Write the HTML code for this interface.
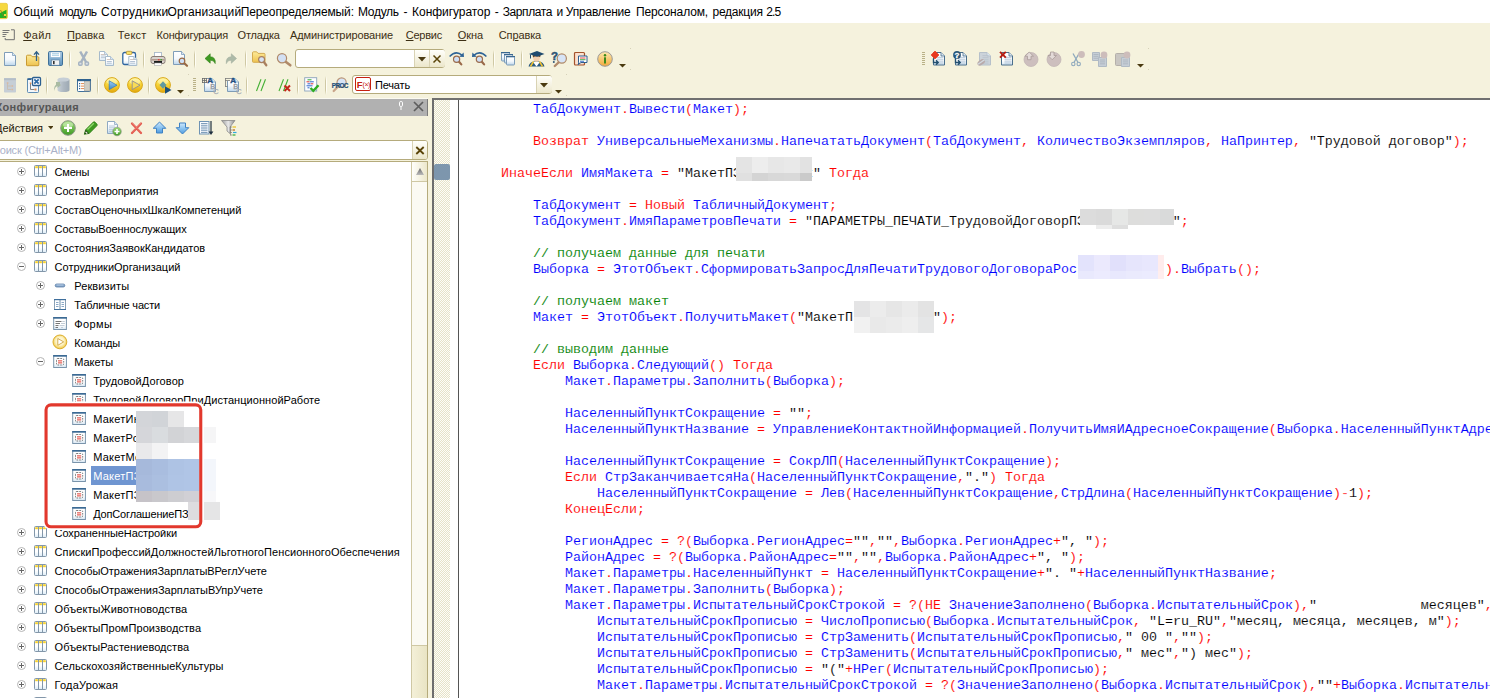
<!DOCTYPE html>
<html lang="ru"><head><meta charset="utf-8"><title>Конфигуратор</title>
<style>
html,body{margin:0;padding:0}
body{width:1490px;height:698px;overflow:hidden;position:relative;background:#f5f2dd;font-family:'Liberation Sans',sans-serif}
.t{position:absolute;white-space:pre}
.i{position:absolute;overflow:visible}
u{text-decoration:underline;text-underline-offset:1px}
.r{color:#f00}.k{color:#000}.g{color:#008000}
</style></head><body>
<div style="position:absolute;left:0;top:0;width:1490px;height:23px;background:#fff"></div>
<svg class="i" style="left:-3px;top:3px" width="11" height="16" viewBox="0 0 11 16"><defs><linearGradient id="gPage" x1="0" y1="0" x2="0" y2="1"><stop offset="0" stop-color="#ffffff"/><stop offset="0.55" stop-color="#f4f8fc"/><stop offset="1" stop-color="#bcd6ec"/></linearGradient><linearGradient id="gPg2" x1="0" y1="0" x2="0" y2="1"><stop offset="0" stop-color="#ffffff"/><stop offset="0.65" stop-color="#ffffff"/><stop offset="1" stop-color="#d6e6f3"/></linearGradient><linearGradient id="gFold" x1="0" y1="0" x2="0" y2="1"><stop offset="0" stop-color="#fdeb9a"/><stop offset="1" stop-color="#eec24f"/></linearGradient><linearGradient id="gGold" x1="0" y1="0" x2="0" y2="1"><stop offset="0" stop-color="#fff29a"/><stop offset="0.45" stop-color="#f8d63a"/><stop offset="1" stop-color="#e3a70c"/></linearGradient><linearGradient id="gBtn" x1="0" y1="0" x2="0" y2="1"><stop offset="0" stop-color="#fffffb"/><stop offset="1" stop-color="#ece7cb"/></linearGradient><linearGradient id="gFlop" x1="0" y1="0" x2="0" y2="1"><stop offset="0" stop-color="#a9cbe6"/><stop offset="1" stop-color="#5f93bd"/></linearGradient><linearGradient id="gCyl" x1="0" y1="0" x2="1" y2="0"><stop offset="0" stop-color="#c9d1d8"/><stop offset="0.5" stop-color="#aeb8c1"/><stop offset="1" stop-color="#9ca8b3"/></linearGradient><linearGradient id="gGreen" x1="0" y1="0" x2="0" y2="1"><stop offset="0" stop-color="#9fdc7a"/><stop offset="1" stop-color="#3e9a22"/></linearGradient><linearGradient id="gBlueArr" x1="0" y1="0" x2="0" y2="1"><stop offset="0" stop-color="#9fd0f5"/><stop offset="1" stop-color="#3c86c8"/></linearGradient><linearGradient id="gBlueArr2" x1="0" y1="0" x2="0" y2="1"><stop offset="0" stop-color="#cfe8fb"/><stop offset="0.5" stop-color="#8cc4f0"/><stop offset="1" stop-color="#4f9be0"/></linearGradient><linearGradient id="gInfo" x1="0" y1="0" x2="0" y2="1"><stop offset="0" stop-color="#ffe9b0"/><stop offset="1" stop-color="#f0a93a"/></linearGradient><linearGradient id="gCol" x1="0" y1="0" x2="0" y2="1"><stop offset="0.55" stop-color="#fff"/><stop offset="1" stop-color="#dcecf7"/></linearGradient><radialGradient id="gCmd" cx=".5" cy=".45" r=".55"><stop offset="0" stop-color="#fffdf0"/><stop offset=".55" stop-color="#fdf3c4"/><stop offset="1" stop-color="#efc53f"/></radialGradient><linearGradient id="gFun" x1="0" y1="0" x2="1" y2="0"><stop offset="0" stop-color="#9a9a9a"/><stop offset="0.5" stop-color="#e8e8e8"/><stop offset="1" stop-color="#8a8a8a"/></linearGradient></defs><rect x="-2" y="0.3" width="12.5" height="15.4" rx="1.6" fill="#f6d83f" stroke="#e2bf2d" stroke-width="0.6"/><path d="M-2 15V12.5L9.5 6.8V15z" fill="#1fb322"/><rect x="7" y="11" width="2" height="2" fill="#f6d83f"/><path d="M3.5 7l4 8" stroke="#8a7a2a" stroke-width="0.8"/></svg>
<div style="position:absolute;left:0;top:5px;height:15px;width:800px">
<span class="t" style="left:13.5px;top:0;font:12px/15px 'Liberation Sans',sans-serif;color:#000;letter-spacing:0.200px">Общий </span>
<span class="t" style="left:59.2px;top:0;font:12px/15px 'Liberation Sans',sans-serif;color:#000;letter-spacing:-0.551px">модуль </span>
<span class="t" style="left:101.1px;top:0;font:12px/15px 'Liberation Sans',sans-serif;color:#000;letter-spacing:0.222px">Сотрудники</span>
<span class="t" style="left:167.5px;top:0;font:12px/15px 'Liberation Sans',sans-serif;color:#000;letter-spacing:0.101px">Организаций</span>
<span class="t" style="left:240.7px;top:0;font:12px/15px 'Liberation Sans',sans-serif;color:#000;letter-spacing:-0.123px">Переопределяемый: </span>
<span class="t" style="left:357.9px;top:0;font:12px/15px 'Liberation Sans',sans-serif;color:#000;letter-spacing:-0.269px">Модуль </span>
<span class="t" style="left:403.5px;top:0;font:12px/15px 'Liberation Sans',sans-serif;color:#000;letter-spacing:0.000px">- </span>
<span class="t" style="left:412.1px;top:0;font:12px/15px 'Liberation Sans',sans-serif;color:#000;letter-spacing:-0.055px">Конфигуратор </span>
<span class="t" style="left:494.7px;top:0;font:12px/15px 'Liberation Sans',sans-serif;color:#000;letter-spacing:0.000px">- </span>
<span class="t" style="left:502.7px;top:0;font:12px/15px 'Liberation Sans',sans-serif;color:#000;letter-spacing:-0.392px">Зарплата </span>
<span class="t" style="left:556.4px;top:0;font:12px/15px 'Liberation Sans',sans-serif;color:#000;letter-spacing:0.000px">и </span>
<span class="t" style="left:565.8px;top:0;font:12px/15px 'Liberation Sans',sans-serif;color:#000;letter-spacing:-0.191px">Управление </span>
<span class="t" style="left:635.9px;top:0;font:12px/15px 'Liberation Sans',sans-serif;color:#000;letter-spacing:-0.118px">Персоналом, </span>
<span class="t" style="left:712.5px;top:0;font:12px/15px 'Liberation Sans',sans-serif;color:#000;letter-spacing:-0.242px">редакция </span>
<span class="t" style="left:766.2px;top:0;font:12px/15px 'Liberation Sans',sans-serif;color:#000;letter-spacing:-0.844px">2.5 </span>
</div>
<svg class="i" style="left:2px;top:29px" width="14" height="12" viewBox="0 0 14 12"><path d="M0.5 1.5h7M0.5 3.5h6M0.5 5.5h4M0.5 7.5h3" stroke="#777" stroke-width="1"/><path d="M9 0.8h3.3v9.9H3.2V9" fill="none" stroke="#6f6f6f" stroke-width="1"/></svg>
<div class="t" style="left:23.2px;top:28px;font:11px/14px 'Liberation Sans',sans-serif;color:#3c2f14;letter-spacing:0.263px"><u>Ф</u>айл</div>
<div class="t" style="left:67px;top:28px;font:11px/14px 'Liberation Sans',sans-serif;color:#3c2f14;letter-spacing:0.021px"><u>П</u>равка</div>
<div class="t" style="left:117.8px;top:28px;font:11px/14px 'Liberation Sans',sans-serif;color:#3c2f14;letter-spacing:0.219px">Текст</div>
<div class="t" style="left:156.6px;top:28px;font:11px/14px 'Liberation Sans',sans-serif;color:#3c2f14;letter-spacing:-0.202px">Конфигурация</div>
<div class="t" style="left:237.6px;top:28px;font:11px/14px 'Liberation Sans',sans-serif;color:#3c2f14;letter-spacing:-0.183px">Отладка</div>
<div class="t" style="left:290px;top:28px;font:11px/14px 'Liberation Sans',sans-serif;color:#3c2f14;letter-spacing:-0.106px">Администрирование</div>
<div class="t" style="left:405.8px;top:28px;font:11px/14px 'Liberation Sans',sans-serif;color:#3c2f14;letter-spacing:-0.245px"><u>С</u>ервис</div>
<div class="t" style="left:457.8px;top:28px;font:11px/14px 'Liberation Sans',sans-serif;color:#3c2f14;letter-spacing:-0.091px"><u>О</u>кна</div>
<div class="t" style="left:498.8px;top:28px;font:11px/14px 'Liberation Sans',sans-serif;color:#3c2f14;letter-spacing:-0.122px">Сп<u>р</u>авка</div>
<svg class="i" style="left:3px;top:51px" width="16" height="16" viewBox="0 0 16 16"><path d="M1.5 1.5h8l3 3v10h-11z" fill="url(#gPage)" stroke="#7f9db9" stroke-width="1"/><path d="M9.5 1.5v3h3" fill="#dbe8f4" stroke="#7f9db9" stroke-width="0.8"/></svg>
<svg class="i" style="left:25px;top:51px" width="16" height="16" viewBox="0 0 16 16"><path d="M1.5 5.2q0-1 1-1h3.4l1.3 1.5h5.6q1 0 1 1V14q0 .7-.8.7H2.3q-.8 0-.8-.7z" fill="url(#gFold)" stroke="#c99a32" stroke-width="1"/><path d="M11.5 10V1.2M9 3.6L11.5 0.8 14 3.6" fill="none" stroke="#2f5f88" stroke-width="1.3"/></svg>
<svg class="i" style="left:47px;top:51px" width="16" height="16" viewBox="0 0 16 16"><rect x="1.5" y="0.5" width="14" height="14" rx="1.2" fill="url(#gFlop)" stroke="#3f7099" stroke-width="1"/><rect x="3.5" y="1" width="10" height="5.3" fill="#fff" stroke="#8fb4d2" stroke-width=".6"/><path d="M5 2.7h7M5 4.3h7" stroke="#8fc0dc" stroke-width=".8"/><rect x="4.5" y="9" width="8" height="5.2" fill="#f2f2f2" stroke="#5b7f9e" stroke-width=".6"/><rect x="6" y="10" width="1.6" height="3.2" fill="#333"/></svg>
<div style="position:absolute;left:69px;top:50px;width:1px;height:19px;background:linear-gradient(#f5f2dd,#cfc8a4 25%,#cfc8a4 75%,#f5f2dd)"></div>
<div style="position:absolute;left:70px;top:50px;width:1px;height:19px;background:linear-gradient(#f5f2dd,#fffef6 25%,#fffef6 75%,#f5f2dd)"></div>
<svg class="i" style="left:76px;top:51px" width="16" height="16" viewBox="0 0 16 16"><path d="M4.200 0.500L10.300 11.500M11 0.500L4.900 11.500" stroke="#a6b3c1" stroke-width="2.500"/><rect x="2.700" y="11" width="3.400" height="3.300" rx="1" fill="#d9dfe6" stroke="#a6b3c1" stroke-width="1.400"/><rect x="9.100" y="11" width="3.400" height="3.300" rx="1" fill="#d9dfe6" stroke="#a6b3c1" stroke-width="1.400"/></svg>
<svg class="i" style="left:98px;top:51px" width="16" height="16" viewBox="0 0 16 16"><path d="M1.5 0.5h5l3 3v6h-8z" fill="url(#gPg2)" stroke="#a6bacb" stroke-width="1"/><path d="M6.5 0.5v3h3" fill="#dbe8f4" stroke="#a6bacb" stroke-width="0.8"/><path d="M2.8 3.5h4" stroke="#c9b9b0" stroke-width=".8"/><path d="M2.8 5.0h5" stroke="#9fb3c9" stroke-width=".8"/><path d="M2.8 6.7h5" stroke="#9fb3c9" stroke-width=".8"/><path d="M7.5 5.5h5l3 3v6h-8z" fill="url(#gPg2)" stroke="#a6bacb" stroke-width="1"/><path d="M12.5 5.5v3h3" fill="#dbe8f4" stroke="#a6bacb" stroke-width="0.8"/><path d="M8.8 8.5h4" stroke="#c9b9b0" stroke-width=".8"/><path d="M8.8 10.5h5" stroke="#9fb3c9" stroke-width=".8"/><path d="M8.8 12.2h5" stroke="#9fb3c9" stroke-width=".8"/></svg>
<svg class="i" style="left:122px;top:51px" width="16" height="16" viewBox="0 0 16 16"><rect x="0.800" y="1.500" width="12.700" height="12" rx="1.800" fill="url(#gPg2)" stroke="#2f65a0" stroke-width="1.300"/><rect x="4.300" y="0.300" width="5.600" height="3.200" rx="1.200" fill="#f7e06a" stroke="#b8912c" stroke-width=".8"/><path d="M6.8 5.5h5l3 3v6h-8z" fill="url(#gPg2)" stroke="#a6bacb" stroke-width="1"/><path d="M11.8 5.5v3h3" fill="#dbe8f4" stroke="#a6bacb" stroke-width="0.8"/><path d="M8.1 8.5h4" stroke="#c9b9b0" stroke-width=".8"/><path d="M8.1 10.5h5" stroke="#9fb3c9" stroke-width=".8"/><path d="M8.1 12.2h5" stroke="#9fb3c9" stroke-width=".8"/></svg>
<div style="position:absolute;left:143px;top:50px;width:1px;height:19px;background:linear-gradient(#f5f2dd,#cfc8a4 25%,#cfc8a4 75%,#f5f2dd)"></div>
<div style="position:absolute;left:144px;top:50px;width:1px;height:19px;background:linear-gradient(#f5f2dd,#fffef6 25%,#fffef6 75%,#f5f2dd)"></div>
<svg class="i" style="left:150px;top:51px" width="16" height="16" viewBox="0 0 16 16"><rect x="4.5" y="1.5" width="7" height="5" fill="#fff" stroke="#a9b9c9" stroke-width=".9"/><rect x="1" y="5.5" width="14" height="7" rx="2" fill="#d9d4cf" stroke="#8a7d76" stroke-width="1"/><rect x="1.8" y="8" width="12.4" height="1.6" fill="#b39c8f"/><rect x="4" y="10" width="8" height="3" fill="#1c1c1c"/><rect x="4.5" y="12" width="7" height="2.6" fill="#fff" stroke="#999" stroke-width=".5"/><rect x="8.2" y="8.1" width="1.3" height="1.3" fill="#e22"/><rect x="10.5" y="8.1" width="1.3" height="1.3" fill="#2a2"/></svg>
<svg class="i" style="left:172px;top:51px" width="16" height="16" viewBox="0 0 16 16"><path d="M1.5 0.5h8l3 3v10h-11z" fill="url(#gPage)" stroke="#7f9db9" stroke-width="1"/><path d="M9.5 0.5v3h3" fill="#dbe8f4" stroke="#7f9db9" stroke-width="0.8"/><path d="M11.82 11.82L15 14.8" stroke="#9a6a44" stroke-width="2.2" stroke-linecap="round"/><circle cx="10" cy="10" r="2.8" fill="#cfe0f6" stroke="#9a6a44" stroke-width="1.2"/></svg>
<div style="position:absolute;left:194px;top:50px;width:1px;height:19px;background:linear-gradient(#f5f2dd,#cfc8a4 25%,#cfc8a4 75%,#f5f2dd)"></div>
<div style="position:absolute;left:195px;top:50px;width:1px;height:19px;background:linear-gradient(#f5f2dd,#fffef6 25%,#fffef6 75%,#f5f2dd)"></div>
<svg class="i" style="left:202px;top:51px" width="16" height="16" viewBox="0 0 16 16"><path d="M3 7.5L8.2 2.8v3q5.6 0 5 6.8q-1.2-3.6-5-3.4v3z" fill="#3f9a22" stroke="#2f7f16" stroke-width=".6"/></svg>
<svg class="i" style="left:223px;top:51px" width="16" height="16" viewBox="0 0 16 16"><path d="M13.5 7.5L8.3 2.8v3q-5.6 0-5 6.8q1.2-3.6 5-3.4v3z" fill="#adbaa8" stroke="#a2afa0" stroke-width=".6"/></svg>
<div style="position:absolute;left:245px;top:50px;width:1px;height:19px;background:linear-gradient(#f5f2dd,#cfc8a4 25%,#cfc8a4 75%,#f5f2dd)"></div>
<div style="position:absolute;left:246px;top:50px;width:1px;height:19px;background:linear-gradient(#f5f2dd,#fffef6 25%,#fffef6 75%,#f5f2dd)"></div>
<svg class="i" style="left:251px;top:51px" width="16" height="16" viewBox="0 0 16 16"><path d="M1.5 1.8q0-1 1-1h3.2l1.3 1.6h6q1 0 1 1V10.500q0 .8-.8.8H2.300q-.8 0-.8-.8z" fill="url(#gFold)" stroke="#d3ab52" stroke-width="1"/><path d="M12.55 10.55L15.3 14.3" stroke="#a9805f" stroke-width="2.3" stroke-linecap="round"/><circle cx="10.6" cy="8.6" r="3" fill="#d5e2f5" stroke="#a9805f" stroke-width="1.2"/></svg>
<svg class="i" style="left:276px;top:51px" width="16" height="16" viewBox="0 0 16 16"><path d="M8.99 10.19L14.3 14.3" stroke="#b08a6a" stroke-width="2.6" stroke-linecap="round"/><circle cx="6" cy="7.2" r="4.6" fill="#d3e0f3" stroke="#b08a6a" stroke-width="1.2"/></svg>
<div style="position:absolute;left:295px;top:49px;width:148px;height:17px;border:1px solid #b5ab7c;border-radius:3px;background:#fff"></div>
<div style="position:absolute;left:414px;top:50px;width:15px;height:17px;border-left:1px solid #d9d3b4;background:linear-gradient(#fffffb,#ece7cb)"></div>
<div style="position:absolute;left:429px;top:50px;width:15px;height:17px;border-left:1px solid #d9d3b4;border-radius:0 2px 2px 0;background:linear-gradient(#fffffb,#ece7cb)"></div>
<svg style="position:absolute;left:418px;top:57px" width="8" height="5.5" viewBox="0 0 8 5.5"><path d="M0 0h8l-4.0 4.5z" fill="#4a3a10"/></svg>
<svg style="position:absolute;left:432px;top:53.500px" width="10" height="10" viewBox="0 0 10 10"><path d="M1.5 1.5l7 7M8.5 1.5l-7 7" stroke="#5a4408" stroke-width="1.500"/></svg>
<svg class="i" style="left:448px;top:51px" width="17" height="16" viewBox="0 0 17 16"><path d="M1.6 5.6Q8 -1.2 14.2 4.4" fill="none" stroke="#2f6496" stroke-width="1.5"/><path d="M11.2 5.8L16 6 15.6 1.4z" fill="#2f6496"/><path d="M10.615 10.315000000000001L13.3 13.4" stroke="#9a6a4a" stroke-width="2.2" stroke-linecap="round"/><circle cx="8.6" cy="8.3" r="3.1" fill="#cfe0f6" stroke="#9a6a4a" stroke-width="1.2"/></svg>
<svg class="i" style="left:471px;top:51px" width="17" height="16" viewBox="0 0 17 16"><path d="M15.400 5.6Q9 -1.2 2.8 4.4" fill="none" stroke="#2f6496" stroke-width="1.5"/><path d="M5.8 5.8L1 6 1.400 1.400z" fill="#2f6496"/><path d="M10.415000000000001 10.315000000000001L13.1 13.4" stroke="#9a6a4a" stroke-width="2.2" stroke-linecap="round"/><circle cx="8.4" cy="8.3" r="3.1" fill="#cfe0f6" stroke="#9a6a4a" stroke-width="1.2"/></svg>
<div style="position:absolute;left:493px;top:50px;width:1px;height:19px;background:linear-gradient(#f5f2dd,#cfc8a4 25%,#cfc8a4 75%,#f5f2dd)"></div>
<div style="position:absolute;left:494px;top:50px;width:1px;height:19px;background:linear-gradient(#f5f2dd,#fffef6 25%,#fffef6 75%,#f5f2dd)"></div>
<svg class="i" style="left:500px;top:51px" width="16" height="16" viewBox="0 0 16 16"><rect x="1.5" y="1.5" width="8" height="8.5" rx=".8" fill="url(#gPage)" stroke="#7d9cb8" stroke-width="1"/><rect x="1" y="1" width="9" height="1.300" fill="#3a6890"/><rect x="4.5" y="3.5" width="8" height="8.5" rx=".8" fill="url(#gPage)" stroke="#7d9cb8" stroke-width="1"/><rect x="4" y="3" width="9" height="1.300" fill="#3a6890"/><rect x="6.5" y="5.5" width="8" height="8.5" rx=".8" fill="url(#gPage)" stroke="#7d9cb8" stroke-width="1"/><rect x="6" y="5" width="9" height="1.300" fill="#3a6890"/></svg>
<div style="position:absolute;left:521px;top:50px;width:1px;height:19px;background:linear-gradient(#f5f2dd,#cfc8a4 25%,#cfc8a4 75%,#f5f2dd)"></div>
<div style="position:absolute;left:522px;top:50px;width:1px;height:19px;background:linear-gradient(#f5f2dd,#fffef6 25%,#fffef6 75%,#f5f2dd)"></div>
<svg class="i" style="left:528px;top:51px" width="17" height="16" viewBox="0 0 17 16"><path d="M0.5 15.5q1-4.500 5.500-5l5 0q4.500 .5 5.500 5z" fill="#2b5a80"/><path d="M5 11l3.500 4.500 3.500-4.500z" fill="#fff"/><path d="M2.500 15.5l3-5M14.500 15.5l-3-5" stroke="#f2c230" stroke-width="1.5"/><ellipse cx="8.500" cy="7" rx="3.300" ry="3.800" fill="#f3cfae"/><path d="M5 6.500q3.500-2.500 7.200-.2l.3-2.300h-7.800z" fill="#6b4a2a"/><path d="M1 3L9 0l7.500 3L9 5.800z" fill="#1f4a6e"/><path d="M2.500 3.500v4" stroke="#1f4a6e" stroke-width="1"/></svg>
<svg class="i" style="left:551px;top:51px" width="17" height="16" viewBox="0 0 17 16"><text x="0" y="9" font-family="Liberation Sans,sans-serif" font-weight="bold" font-size="11.500" fill="#2c5577" stroke="#2c5577" stroke-width=".5">?</text><circle cx="2.800" cy="11" r="1" fill="#2c5577"/><path d="M7.500 11.500L3.800 15" stroke="#b08a6a" stroke-width="2.400" stroke-linecap="round"/><circle cx="10.800" cy="7.500" r="4.600" fill="#d7e4f6" stroke="#b08a6a" stroke-width="1.200"/></svg>
<svg class="i" style="left:573px;top:51px" width="16" height="16" viewBox="0 0 16 16"><rect x="1.500" y="1.500" width="10" height="12.500" rx="1" fill="#fbe1d0" stroke="#a4532c" stroke-width="1.200"/><path d="M5.500 5h8.500v6.500h-6l-3 2.200 1-2.200h-.5z" fill="#fff" stroke="#2f5f8f" stroke-width="1"/><path d="M7 7h5.500" stroke="#d33" stroke-width=".9"/><path d="M7 8.700h5.500" stroke="#3a3" stroke-width=".9"/><path d="M7 10.300h4" stroke="#36c" stroke-width=".9"/></svg>
<svg class="i" style="left:597px;top:51px" width="16" height="16" viewBox="0 0 16 16"><circle cx="8" cy="8" r="7.300" fill="url(#gInfo)" stroke="#9c9a98" stroke-width="1"/><circle cx="8" cy="4.200" r="1.200" fill="#3a8a1a"/><rect x="7" y="6.300" width="2" height="6.200" fill="#3a8a1a"/></svg>
<svg style="position:absolute;left:619px;top:64px" width="7" height="4.6" viewBox="0 0 7 4.6"><path d="M0 0h7l-3.5 3.6z" fill="#4a3a10"/></svg>
<div style="position:absolute;left:922px;top:52px;width:3px;height:13px;background:repeating-linear-gradient(#b9b187 0 1px,transparent 1px 2px)"></div>
<svg class="i" style="left:931px;top:51px" width="16" height="16" viewBox="0 0 16 16"><path d="M2.5 1.5h7.5l3.5 3.5v9.0h-11z" fill="url(#gPg2)" stroke="#4a6f8c" stroke-width="1"/><path d="M10.0 1.5v3.5h3.5" fill="#dbe8f4" stroke="#4a6f8c" stroke-width="0.8"/><path d="M5.5 6.3h7" stroke="#9fb9d0" stroke-width=".8"/><path d="M5.5 8.2h7" stroke="#9fb9d0" stroke-width=".8"/><path d="M5.5 10.1h7" stroke="#9fb9d0" stroke-width=".8"/><path d="M5.5 12.0h7" stroke="#9fb9d0" stroke-width=".8"/><path d="M2.500 7.500v4h4M5 9.300l2.200 2.200L5 13.700" fill="none" stroke="#23506f" stroke-width="1.400"/><path d="M4 0.100L7.900 4 4 7.900 0.100 4z" fill="#e8391f" stroke="#e8391f" stroke-width=".8" stroke-linejoin="round"/></svg>
<svg class="i" style="left:953px;top:51px" width="16" height="16" viewBox="0 0 16 16"><path d="M2.5 1.5h7.5l3.5 3.5v9.0h-11z" fill="url(#gPg2)" stroke="#4a6f8c" stroke-width="1"/><path d="M10.0 1.5v3.5h3.5" fill="#dbe8f4" stroke="#4a6f8c" stroke-width="0.8"/><path d="M5.5 6.3h7" stroke="#9fb9d0" stroke-width=".8"/><path d="M5.5 8.2h7" stroke="#9fb9d0" stroke-width=".8"/><path d="M5.5 10.1h7" stroke="#9fb9d0" stroke-width=".8"/><path d="M5.5 12.0h7" stroke="#9fb9d0" stroke-width=".8"/><path d="M2.500 7.500v4h4M5 9.300l2.200 2.200L5 13.700" fill="none" stroke="#23506f" stroke-width="1.400"/><circle cx="4" cy="4" r="3.900" fill="#2b5778"/><text x="1.600" y="7" font-family="Liberation Sans,sans-serif" font-weight="bold" font-size="8" fill="#fff" stroke="#fff" stroke-width=".3">?</text></svg>
<svg class="i" style="left:977px;top:51px" width="16" height="16" viewBox="0 0 16 16"><path d="M2.5 1.5h7.5l3.5 3.5v9.0h-11z" fill="#ccd3da" stroke="#b6c0ca" stroke-width="1"/><path d="M10.0 1.5v3.5h3.5" fill="#dbe8f4" stroke="#b6c0ca" stroke-width="0.8"/><path d="M5.5 4.5h6" stroke="#b9c3cd" stroke-width=".8"/><path d="M5.5 6.4h6" stroke="#b9c3cd" stroke-width=".8"/><path d="M5.5 8.3h6" stroke="#b9c3cd" stroke-width=".8"/><path d="M5.5 10.2h6" stroke="#b9c3cd" stroke-width=".8"/><path d="M5.5 12.1h6" stroke="#b9c3cd" stroke-width=".8"/><ellipse cx="4.200" cy="11.300" rx="4.200" ry="2.500" transform="rotate(-35 4.200 11.300)" fill="#b9abab"/><path d="M1 13.300l6.500-4.500" stroke="#d3dbe2" stroke-width="1.300"/></svg>
<svg class="i" style="left:999px;top:51px" width="16" height="16" viewBox="0 0 16 16"><path d="M2.5 1.5h7.5l3.5 3.5v9.0h-11z" fill="url(#gPg2)" stroke="#4a6f8c" stroke-width="1"/><path d="M10.0 1.5v3.5h3.5" fill="#dbe8f4" stroke="#4a6f8c" stroke-width="0.8"/><path d="M5.5 6.3h7" stroke="#9fb9d0" stroke-width=".8"/><path d="M5.5 8.2h7" stroke="#9fb9d0" stroke-width=".8"/><path d="M5.5 10.1h7" stroke="#9fb9d0" stroke-width=".8"/><path d="M5.5 12.0h7" stroke="#9fb9d0" stroke-width=".8"/><path d="M1 0.800l5.800 5.800M6.800 0.800L1 6.600" stroke="#b81c10" stroke-width="1.900"/></svg>
<svg class="i" style="left:1023px;top:51px" width="16" height="16" viewBox="0 0 16 16"><circle cx="8" cy="8.500" r="7" fill="#cdbfbe" stroke="#c3b6b5" stroke-width=".8"/><path d="M6.200 1L2 5.200h2.500v3.500h3.500V5.200h2.500z" fill="#e3dad8" stroke="#a89a98" stroke-width=".8"/></svg>
<svg class="i" style="left:1046px;top:51px" width="16" height="16" viewBox="0 0 16 16"><circle cx="8" cy="8.500" r="7" fill="#cdbfbe" stroke="#c3b6b5" stroke-width=".8"/><path d="M6.200 8.700L2 4.500h2.500V1h3.500v3.500h2.500z" fill="#e3dad8" stroke="#a89a98" stroke-width=".8"/></svg>
<svg class="i" style="left:1070px;top:51px" width="16" height="16" viewBox="0 0 16 16"><path d="M3 2.500l5 9M9 2.500l-5 9" stroke="#8fa9bd" stroke-width="1.300"/><circle cx="3.300" cy="13" r="1.700" fill="none" stroke="#8fa9bd" stroke-width="1.100"/><circle cx="8.700" cy="13" r="1.700" fill="none" stroke="#8fa9bd" stroke-width="1.100"/><circle cx="11.500" cy="3.500" r="3.400" fill="#cdbdbb"/></svg>
<svg class="i" style="left:1092px;top:51px" width="17" height="16" viewBox="0 0 17 16"><path d="M0.5 1.5h7l0 0v8h-7z" fill="#c6ced6" stroke="#b0bac4" stroke-width="1"/><path d="M7.5 1.5v0h0" fill="#dbe8f4" stroke="#b0bac4" stroke-width="0.8"/><path d="M1.5 3.5h5" stroke="#a9b3bd" stroke-width=".8"/><path d="M1.5 5.4h5" stroke="#a9b3bd" stroke-width=".8"/><path d="M1.5 7.3h5" stroke="#a9b3bd" stroke-width=".8"/><path d="M6.5 6.5h8l0 0v9h-8z" fill="#c6ced6" stroke="#b0bac4" stroke-width="1"/><path d="M14.5 6.5v0h0" fill="#dbe8f4" stroke="#b0bac4" stroke-width="0.8"/><path d="M8 9.0h5" stroke="#a9b3bd" stroke-width=".8"/><path d="M8 10.9h5" stroke="#a9b3bd" stroke-width=".8"/><path d="M8 12.8h5" stroke="#a9b3bd" stroke-width=".8"/><circle cx="12" cy="4" r="3.400" fill="#cdbdbb"/></svg>
<svg class="i" style="left:1115px;top:51px" width="17" height="16" viewBox="0 0 17 16"><rect x="0.500" y="2.500" width="11" height="12" rx="1" fill="#c9c6c2" stroke="#b5b0aa" stroke-width="1"/><path d="M6.5 6.5h8l0 0v9h-8z" fill="#c6ced6" stroke="#b0bac4" stroke-width="1"/><path d="M14.5 6.5v0h0" fill="#dbe8f4" stroke="#b0bac4" stroke-width="0.8"/><path d="M8 9.0h5" stroke="#a9b3bd" stroke-width=".8"/><path d="M8 10.9h5" stroke="#a9b3bd" stroke-width=".8"/><path d="M8 12.8h5" stroke="#a9b3bd" stroke-width=".8"/><circle cx="12" cy="4" r="3.400" fill="#cdbdbb"/></svg>
<svg style="position:absolute;left:1137px;top:64px" width="7" height="4.6" viewBox="0 0 7 4.6"><path d="M0 0h7l-3.5 3.6z" fill="#4a3a10"/></svg>
<svg class="i" style="left:3px;top:77px" width="16" height="16" viewBox="0 0 16 16"><rect x="1" y="1.200" width="12" height="14.300" rx=".8" fill="#c6ced6"/><rect x="1" y="1.200" width="12" height="2" fill="#b4bec8"/><path d="M4.500 6v6.500h4M4.500 9h4" fill="none" stroke="#c9bdb0" stroke-width=".9"/><rect x="3.800" y="5.200" width="1.600" height="1.600" fill="#d9b9a0"/><rect x="8.500" y="8.200" width="1.600" height="1.600" fill="#d9b9a0"/><rect x="8.500" y="11.700" width="1.600" height="1.600" fill="#d9b9a0"/></svg>
<svg class="i" style="left:26px;top:77px" width="16" height="16" viewBox="0 0 16 16"><rect x="1.500" y="1.500" width="11" height="14" rx=".8" fill="#f3f7fb" stroke="#5f8db4" stroke-width="1"/><rect x="1.500" y="1.500" width="4" height="1.500" fill="#2f5f8f"/><path d="M4.500 7v5.500h4" fill="none" stroke="#777" stroke-width=".9"/><rect x="3.800" y="5.500" width="1.500" height="1.500" fill="#e08a50"/><rect x="8.500" y="11.500" width="2" height="2" fill="#e08a50"/><rect x="6.500" y="0.500" width="8" height="8" rx="1" fill="#fff" stroke="#2c5f90" stroke-width="1.300"/><path d="M8.300 2.300l4.400 4.400M12.700 2.300l-4.400 4.400" stroke="#2c6aa8" stroke-width="1.700"/></svg>
<div style="position:absolute;left:46px;top:76px;width:1px;height:19px;background:linear-gradient(#f5f2dd,#cfc8a4 25%,#cfc8a4 75%,#f5f2dd)"></div>
<div style="position:absolute;left:47px;top:76px;width:1px;height:19px;background:linear-gradient(#f5f2dd,#fffef6 25%,#fffef6 75%,#f5f2dd)"></div>
<svg class="i" style="left:53px;top:77px" width="17" height="16" viewBox="0 0 17 16"><path d="M4.500 2.500v10.500q0 2 6 2t6-2V2.500z" fill="url(#gCyl)"/><ellipse cx="10.500" cy="2.500" rx="6" ry="2" fill="#c5ced6"/><path d="M1.500 14q-1.500-5 3-7.200V5l3.500 3-3.500 3V9q-3 1-3 5z" fill="#a9bba2" transform="translate(0,0)"/><rect x="3" y="5" width="4" height="4" fill="#a9bba2"/></svg>
<svg class="i" style="left:76px;top:77px" width="16" height="16" viewBox="0 0 16 16"><rect x="1.500" y="2.500" width="13" height="12" rx=".8" fill="#fff" stroke="#3f709c" stroke-width="1"/><rect x="1" y="2" width="14" height="2.200" fill="#2f628f"/><rect x="8.500" y="4.500" width="5.500" height="9.500" fill="#cfcdc4" stroke="#9a988f" stroke-width=".5"/><rect x="3" y="6" width="1.200" height="1.200" fill="#2c5f90"/><path d="M5 6.6h3" stroke="#e08a50" stroke-width="1"/><rect x="3" y="8.5" width="1.200" height="1.200" fill="#2c5f90"/><path d="M5 9.1h3" stroke="#e08a50" stroke-width="1"/><rect x="3" y="11" width="1.200" height="1.200" fill="#2c5f90"/><path d="M5 11.6h3" stroke="#e08a50" stroke-width="1"/></svg>
<div style="position:absolute;left:97px;top:76px;width:1px;height:19px;background:linear-gradient(#f5f2dd,#cfc8a4 25%,#cfc8a4 75%,#f5f2dd)"></div>
<div style="position:absolute;left:98px;top:76px;width:1px;height:19px;background:linear-gradient(#f5f2dd,#fffef6 25%,#fffef6 75%,#f5f2dd)"></div>
<svg class="i" style="left:104px;top:77px" width="16" height="16" viewBox="0 0 16 16"><circle cx="8" cy="8" r="7.400" fill="url(#gGold)" stroke="#d9a81a" stroke-width="1"/><ellipse cx="8" cy="4.600" rx="5.200" ry="3" fill="#fff7b8" opacity=".55"/><path d="M5.200 3.800L13 8.200 5.200 12.600z" fill="url(#gBlueArr)" stroke="#2f79bd" stroke-width=".7"/></svg>
<svg class="i" style="left:127px;top:77px" width="16" height="16" viewBox="0 0 16 16"><circle cx="8" cy="8" r="7.400" fill="url(#gGold)" stroke="#d9a81a" stroke-width="1"/><ellipse cx="8" cy="4.600" rx="5.200" ry="3" fill="#fff7b8" opacity=".55"/><path d="M5.200 3.800L13 8.200 5.200 12.600z" fill="#f9dc55" stroke="#8f8f96" stroke-width=".9"/></svg>
<div style="position:absolute;left:148px;top:76px;width:1px;height:19px;background:linear-gradient(#f5f2dd,#cfc8a4 25%,#cfc8a4 75%,#f5f2dd)"></div>
<div style="position:absolute;left:149px;top:76px;width:1px;height:19px;background:linear-gradient(#f5f2dd,#fffef6 25%,#fffef6 75%,#f5f2dd)"></div>
<svg class="i" style="left:155px;top:77px" width="17" height="17" viewBox="0 0 17 17"><circle cx="8" cy="8" r="7.400" fill="url(#gGold)" stroke="#d9a81a" stroke-width="1"/><ellipse cx="8" cy="4.600" rx="5.200" ry="3" fill="#fff7b8" opacity=".55"/><path d="M8 4.300L11.500 8 8 11.700 4.500 8z" fill="#5f9aa0"/><circle cx="10" cy="10" r="3.500" fill="#fbe88a" opacity=".0"/><path d="M10 9.200L16.500 13 10 16.800z" fill="#1d5078"/></svg>
<svg style="position:absolute;left:177px;top:90px" width="7" height="4.6" viewBox="0 0 7 4.6"><path d="M0 0h7l-3.5 3.6z" fill="#4a3a10"/></svg>
<div style="position:absolute;left:193px;top:78px;width:3px;height:13px;background:repeating-linear-gradient(#b9b187 0 1px,transparent 1px 2px)"></div>
<svg class="i" style="left:202px;top:77px" width="17" height="17" viewBox="0 0 17 17"><path d="M2.5 1.5h7.5l3.5 3.5v9.5h-11z" fill="url(#gPage)" stroke="#7f9cb6" stroke-width="1"/><path d="M10.0 1.5v3.5h3.5" fill="#dbe8f4" stroke="#7f9cb6" stroke-width="0.8"/><rect x="0" y="1" width="5" height="5" fill="#f5f2dd"/><path d="M0 1.500h5M0 3.500h5M0 5.500h5M0.500 1v5M2.500 1v5M4.500 1v5" stroke="#6a6a6a" stroke-width=".8"/><text x="5.200" y="6.300" font-family="Liberation Sans,sans-serif" font-weight="bold" font-size="7.800" fill="#1f4f7f" stroke="#1f4f7f" stroke-width=".4">A</text><text x="8.300" y="12" font-family="Liberation Sans,sans-serif" font-size="7.500" fill="#8f9499" stroke="#8f9499" stroke-width=".25">B</text><text x="11.300" y="16.600" font-family="Liberation Sans,sans-serif" font-size="7.500" fill="#a6acb2" stroke="#a6acb2" stroke-width=".25">C</text></svg>
<svg class="i" style="left:225px;top:77px" width="17" height="17" viewBox="0 0 17 17"><path d="M2.5 1.5h7.5l3.5 3.5v9.5h-11z" fill="url(#gPage)" stroke="#7f9cb6" stroke-width="1"/><path d="M10.0 1.5v3.5h3.5" fill="#dbe8f4" stroke="#7f9cb6" stroke-width="0.8"/><rect x="0" y="1" width="5" height="3" fill="#f5f2dd"/><path d="M0 1.500h5M0 3.500h5M0.500 1v9M0.500 9.500h2" stroke="#7a7a7a" stroke-width=".8" fill="none"/><text x="5.200" y="6.300" font-family="Liberation Sans,sans-serif" font-weight="bold" font-size="7.800" fill="#1f4f7f" stroke="#1f4f7f" stroke-width=".4">A</text><text x="8.300" y="12" font-family="Liberation Sans,sans-serif" font-size="7.500" fill="#8f9499" stroke="#8f9499" stroke-width=".25">B</text><text x="11.300" y="16.600" font-family="Liberation Sans,sans-serif" font-size="7.500" fill="#a6acb2" stroke="#a6acb2" stroke-width=".25">C</text></svg>
<div style="position:absolute;left:246px;top:76px;width:1px;height:19px;background:linear-gradient(#f5f2dd,#cfc8a4 25%,#cfc8a4 75%,#f5f2dd)"></div>
<div style="position:absolute;left:247px;top:76px;width:1px;height:19px;background:linear-gradient(#f5f2dd,#fffef6 25%,#fffef6 75%,#f5f2dd)"></div>
<svg class="i" style="left:253px;top:77px" width="16" height="16" viewBox="0 0 16 16"><path d="M3.500 14L8 2.200M8 14l4.500-11.800" stroke="#45b035" stroke-width="1.100"/></svg>
<svg class="i" style="left:276px;top:77px" width="16" height="16" viewBox="0 0 16 16"><path d="M3 14L7.500 2.200M7.500 14L12 2.200" stroke="#45b035" stroke-width="1.100"/><path d="M8.500 8.500l5.500 5.500M14 8.500l-5.500 5.500" stroke="#c3271a" stroke-width="2"/></svg>
<div style="position:absolute;left:297px;top:76px;width:1px;height:19px;background:linear-gradient(#f5f2dd,#cfc8a4 25%,#cfc8a4 75%,#f5f2dd)"></div>
<div style="position:absolute;left:298px;top:76px;width:1px;height:19px;background:linear-gradient(#f5f2dd,#fffef6 25%,#fffef6 75%,#f5f2dd)"></div>
<svg class="i" style="left:304px;top:77px" width="16" height="16" viewBox="0 0 16 16"><rect x="0.700" y="0.700" width="12" height="13.300" fill="#fdfeff" stroke="#8aa3ba" stroke-width=".9"/><path d="M3.500 2.800h4" stroke="#3a3" stroke-width="1"/><path d="M2.500 4.800h3" stroke="#d33" stroke-width="1"/><path d="M5.800 4.800h4" stroke="#36c" stroke-width="1"/><path d="M3.500 6.800h3" stroke="#36c" stroke-width="1"/><path d="M6.800 6.800h2.500" stroke="#d33" stroke-width="1"/><path d="M2.500 8.800h6" stroke="#36c" stroke-width="1"/><path d="M3.500 10.800h2" stroke="#36c" stroke-width="1"/><path d="M6.500 11l2.800 2.800L14.500 8.300" fill="none" stroke="#2fae22" stroke-width="2.400"/></svg>
<div style="position:absolute;left:325px;top:76px;width:1px;height:19px;background:linear-gradient(#f5f2dd,#cfc8a4 25%,#cfc8a4 75%,#f5f2dd)"></div>
<div style="position:absolute;left:326px;top:76px;width:1px;height:19px;background:linear-gradient(#f5f2dd,#fffef6 25%,#fffef6 75%,#f5f2dd)"></div>
<svg class="i" style="left:331px;top:77px" width="17" height="16" viewBox="0 0 17 16"><path d="M7.500 9L2.700 14" stroke="#c9a58a" stroke-width="2.300" stroke-linecap="round"/><circle cx="10.600" cy="5.500" r="4.600" fill="#d7e4f6" stroke="#b99476" stroke-width="1.200"/><text x="0.800" y="10.700" font-family="Liberation Sans,sans-serif" font-weight="bold" font-size="6.400" fill="#23507a" stroke="#23507a" stroke-width=".2" letter-spacing="-.6">PROC</text></svg>
<div style="position:absolute;left:352px;top:75px;width:198px;height:17px;border:1px solid #b5ab7c;border-radius:3px;background:#fff"></div>
<div style="position:absolute;left:536px;top:76px;width:15px;height:17px;border-left:1px solid #d9d3b4;border-radius:0 2px 2px 0;background:linear-gradient(#fffffb,#ece7cb)"></div>
<svg style="position:absolute;left:539.5px;top:82.5px" width="8" height="5.5" viewBox="0 0 8 5.5"><path d="M0 0h8l-4.0 4.5z" fill="#4a3a10"/></svg>
<svg class="i" style="left:355px;top:77px" width="16" height="14" viewBox="0 0 16 14"><rect x="0.500" y="0.500" width="15" height="13" rx="1.500" fill="#fff" stroke="#c5200f" stroke-width="1"/><text x="1.800" y="10.500" font-family="Liberation Sans,sans-serif" font-weight="bold" font-size="9.500" fill="#c5200f">F</text><text x="7.600" y="9.900" font-family="Liberation Sans,sans-serif" font-size="7" fill="#c5200f" letter-spacing="-.5">(×)</text></svg>
<div class="t" style="left:375px;top:78px;font:11px/14px 'Liberation Sans',sans-serif;color:#000;letter-spacing:-0.174px">Печать</div>
<svg style="position:absolute;left:555px;top:90px" width="7" height="4.6" viewBox="0 0 7 4.6"><path d="M0 0h7l-3.5 3.6z" fill="#4a3a10"/></svg>
<div style="position:absolute;left:1148px;top:48px;width:1px;height:1px;background:#d6d1b8"></div>
<div style="position:absolute;left:1148px;top:69px;width:1px;height:1px;background:#d6d1b8"></div>
<div style="position:absolute;left:630px;top:48px;width:1px;height:1px;background:#d6d1b8"></div>
<div style="position:absolute;left:630px;top:69px;width:1px;height:1px;background:#d6d1b8"></div>
<div style="position:absolute;left:566px;top:74px;width:1px;height:1px;background:#d6d1b8"></div>
<div style="position:absolute;left:566px;top:95px;width:1px;height:1px;background:#d6d1b8"></div>
<div style="position:absolute;left:188px;top:74px;width:1px;height:1px;background:#d6d1b8"></div>
<div style="position:absolute;left:188px;top:95px;width:1px;height:1px;background:#d6d1b8"></div>
<div style="position:absolute;left:0;top:98px;width:428px;height:1px;background:#fbfaf2"></div>
<div style="position:absolute;left:0;top:99px;width:427px;height:17px;background:#b1b1b1;border-right:1px solid #7b7b7b"></div>
<div class="t" style="left:-4.5px;top:100px;font:bold 11px/14px 'Liberation Sans',sans-serif;color:#555;letter-spacing:0.307px">Конфигурация</div>
<svg style="position:absolute;left:397px;top:101px" width="8" height="10" viewBox="0 0 8 10"><rect x="2.5" y="0.5" width="3" height="5" rx="1.3" fill="none" stroke="#fff" stroke-width="1"/><path d="M4 6v3" stroke="#fff" stroke-width="1"/></svg>
<svg style="position:absolute;left:413px;top:101px" width="11" height="11" viewBox="0 0 11 11"><path d="M1 1l9 9M10 1l-9 9" stroke="#5e5e5e" stroke-width="1.7"/></svg>
<div class="t" style="left:-5px;top:121px;font:11px/14px 'Liberation Sans',sans-serif;color:#1c1608;letter-spacing:-0.025px">Действия</div>
<svg style="position:absolute;left:47.5px;top:126px" width="5.6" height="4.2" viewBox="0 0 5.6 4.2"><path d="M0 0h5.6l-2.8 3.2z" fill="#4a3a10"/></svg>
<svg class="i" style="left:60px;top:120px" width="16" height="16" viewBox="0 0 16 16"><circle cx="8" cy="8" r="7.300" fill="url(#gGreen)" stroke="#8f9a8a" stroke-width="1"/><ellipse cx="8" cy="4.800" rx="5" ry="2.800" fill="#d5f2c2" opacity=".6"/><path d="M8 4v8M4 8h8" stroke="#fff" stroke-width="2"/></svg>
<svg class="i" style="left:83px;top:120px" width="16" height="16" viewBox="0 0 16 16"><path d="M1.300 14.300l1.300-4.600L10.200 2.100q.9-.9 1.800 0l1.900 1.900q.9.900 0 1.800L6.300 13.400z" fill="#3f9a22" stroke="#2a7a12" stroke-width=".7"/><path d="M1.300 14.300l1.300-4.600 3.700 3.700z" fill="#1f4a10"/><path d="M2.600 11.800l1.700 1.700" stroke="#f3f3e8" stroke-width="1.200"/><path d="M4.500 9.500L10.800 3.200" stroke="#8fd86a" stroke-width="1.300"/></svg>
<svg class="i" style="left:106px;top:120px" width="16" height="16" viewBox="0 0 16 16"><path d="M1.5 1.5h7l3 3v9h-10z" fill="url(#gPage)" stroke="#8fa9c2" stroke-width="1"/><path d="M8.5 1.5v3h3" fill="#dbe8f4" stroke="#8fa9c2" stroke-width="0.8"/><path d="M3 6.0h6" stroke="#a9bfd4" stroke-width=".8"/><path d="M3 7.8h6" stroke="#a9bfd4" stroke-width=".8"/><path d="M3 9.6h6" stroke="#a9bfd4" stroke-width=".8"/><path d="M3 11.4h6" stroke="#a9bfd4" stroke-width=".8"/><circle cx="11" cy="11.500" r="4.300" fill="url(#gGreen)" stroke="#8f9a8a" stroke-width=".7"/><path d="M11 9v5M8.500 11.500h5" stroke="#fff" stroke-width="1.600"/></svg>
<svg class="i" style="left:129px;top:120px" width="16" height="16" viewBox="0 0 16 16"><path d="M3 3.500l9 9.500M12 3.500L3 13" stroke="#e2584c" stroke-width="2.300" stroke-linecap="round"/><path d="M3.300 3.300l8.400 8.900M11.700 3.300L3.300 12.200" stroke="#f08a80" stroke-width=".7" stroke-linecap="round"/></svg>
<svg class="i" style="left:152px;top:120px" width="16" height="16" viewBox="0 0 16 16"><path d="M7.500 2L13.800 8.300h-3.300v4.700H4.500V8.300H1.200z" fill="url(#gBlueArr2)" stroke="#3f82c4" stroke-width="1"/></svg>
<svg class="i" style="left:175px;top:120px" width="16" height="16" viewBox="0 0 16 16"><path d="M7.500 14L13.800 7.700h-3.300V3H4.500v4.700H1.200z" fill="url(#gBlueArr2)" stroke="#3f82c4" stroke-width="1"/></svg>
<svg class="i" style="left:198px;top:120px" width="16" height="16" viewBox="0 0 16 16"><rect x="1.500" y="1.500" width="9.500" height="12.500" fill="#fafcfe" stroke="#6f93b4" stroke-width="1"/><path d="M3 3.5h6.5" stroke="#5f86ab" stroke-width=".8"/><path d="M3 5.3h6.5" stroke="#5f86ab" stroke-width=".8"/><path d="M3 7.1h6.5" stroke="#5f86ab" stroke-width=".8"/><path d="M3 8.9h6.5" stroke="#5f86ab" stroke-width=".8"/><path d="M3 10.7h6.5" stroke="#5f86ab" stroke-width=".8"/><path d="M3 12.5h6.5" stroke="#5f86ab" stroke-width=".8"/><path d="M13 1v12" stroke="#1f2f3f" stroke-width="1.200"/><path d="M10.600 11.500h4.800L13 15z" fill="#1f2f3f"/></svg>
<svg class="i" style="left:221px;top:120px" width="17" height="16" viewBox="0 0 17 16"><path d="M0.500 0.500h13.500L9 7v6.500L6 11V7z" fill="url(#gFun)" stroke="#8a8a8a" stroke-width=".8"/><path d="M9.500 6.500v9M9.500 7h1.500M9.500 10h1.500M9.500 12.500h1.500M9.500 15h1.500" stroke="#666" stroke-width=".6" fill="none"/><path d="M11.500 7h3.500" stroke="#e8c020" stroke-width="1.200"/><path d="M11.500 10h2.500" stroke="#b5651d" stroke-width="1.200"/><path d="M12 12.500h3.500" stroke="#2fa8e0" stroke-width="1.200"/><path d="M11.500 15h3" stroke="#3a3" stroke-width="1.200"/></svg>
<div style="position:absolute;left:-3px;top:140px;width:429px;height:18px;border:1px solid #b5ab7c;border-radius:3px;background:#fff"></div>
<div style="position:absolute;left:412px;top:141px;width:14px;height:18px;border-left:1px solid #d9d3b4;border-radius:0 2px 2px 0;background:linear-gradient(#fffffb,#ece7cb)"></div>
<svg style="position:absolute;left:415px;top:146px" width="10" height="9" viewBox="0 0 10 9"><path d="M1.3 1l7.4 7M8.7 1l-7.4 7" stroke="#5a4408" stroke-width="1.8"/></svg>
<div class="t" style="left:-8px;top:143px;font:11px/14px 'Liberation Sans',sans-serif;color:#aab1c8;letter-spacing:-0.185px">Поиск (Ctrl+Alt+M)</div>
<div style="position:absolute;left:-3px;top:161px;width:429px;height:560px;border:1px solid #b5ab7c;background:#fff"></div>
<div style="position:absolute;left:411px;top:162px;width:16px;height:540px;border-left:1px solid #cfc8a4;background:#fbfaf3;box-sizing:border-box"></div>
<div style="position:absolute;left:412px;top:162px;width:15px;height:20px;border-bottom:1px solid #cfc8a4;background:linear-gradient(90deg,#fffffb,#ece7cb);box-sizing:border-box"></div>
<svg style="position:absolute;left:416px;top:168px" width="8" height="7" viewBox="0 0 8 7"><defs><linearGradient id="sg" x1="0" y1="0" x2="0" y2="1"><stop offset="0" stop-color="#666"/><stop offset="1" stop-color="#bbb"/></linearGradient></defs><path d="M4 0L8 7H0z" fill="url(#sg)"/></svg>
<div style="position:absolute;left:412px;top:645px;width:15px;height:60px;border-top:1px solid #cfc8a4;background:linear-gradient(90deg,#f4f0d8,#e9e4c4);box-sizing:border-box"></div>
<svg style="position:absolute;left:17px;top:167px" width="9" height="9" viewBox="0 0 9 9"><circle cx="4.500" cy="4.500" r="4" fill="#fff" stroke="#b4b4b4" stroke-width="1"/><path d="M2 4.500h5M4.500 2v5" stroke="#666" stroke-width="1"/></svg>
<svg class="i" style="left:33px;top:163px" width="16" height="16" viewBox="0 0 16 16"><rect x="1.500" y="2.500" width="12" height="11" rx="1" fill="url(#gCol)" stroke="#8397aa" stroke-width="1"/><path d="M5.500 2.500v11M9.500 2.500v11" stroke="#8397aa" stroke-width="1"/><rect x="2.200" y="3.200" width="2.700" height="2" fill="#f7d22e"/><rect x="6.100" y="3.200" width="2.800" height="2" fill="#f7d22e"/><rect x="10.100" y="3.200" width="2.700" height="2" fill="#f7d22e"/></svg>
<div class="t" style="left:54.6px;top:165.0px;font:11px/14px 'Liberation Sans',sans-serif;color:#000;letter-spacing:-0.222px">Смены</div>
<svg style="position:absolute;left:17px;top:186px" width="9" height="9" viewBox="0 0 9 9"><circle cx="4.500" cy="4.500" r="4" fill="#fff" stroke="#b4b4b4" stroke-width="1"/><path d="M2 4.500h5M4.500 2v5" stroke="#666" stroke-width="1"/></svg>
<svg class="i" style="left:33px;top:182px" width="16" height="16" viewBox="0 0 16 16"><rect x="1.500" y="2.500" width="12" height="11" rx="1" fill="url(#gCol)" stroke="#8397aa" stroke-width="1"/><path d="M5.500 2.500v11M9.500 2.500v11" stroke="#8397aa" stroke-width="1"/><rect x="2.200" y="3.200" width="2.700" height="2" fill="#f7d22e"/><rect x="6.100" y="3.200" width="2.800" height="2" fill="#f7d22e"/><rect x="10.100" y="3.200" width="2.700" height="2" fill="#f7d22e"/></svg>
<div class="t" style="left:54.6px;top:184.0px;font:11px/14px 'Liberation Sans',sans-serif;color:#000;letter-spacing:-0.094px">СоставМероприятия</div>
<svg style="position:absolute;left:17px;top:205px" width="9" height="9" viewBox="0 0 9 9"><circle cx="4.500" cy="4.500" r="4" fill="#fff" stroke="#b4b4b4" stroke-width="1"/><path d="M2 4.500h5M4.500 2v5" stroke="#666" stroke-width="1"/></svg>
<svg class="i" style="left:33px;top:201px" width="16" height="16" viewBox="0 0 16 16"><rect x="1.500" y="2.500" width="12" height="11" rx="1" fill="url(#gCol)" stroke="#8397aa" stroke-width="1"/><path d="M5.500 2.500v11M9.500 2.500v11" stroke="#8397aa" stroke-width="1"/><rect x="2.200" y="3.200" width="2.700" height="2" fill="#f7d22e"/><rect x="6.100" y="3.200" width="2.800" height="2" fill="#f7d22e"/><rect x="10.100" y="3.200" width="2.700" height="2" fill="#f7d22e"/></svg>
<div class="t" style="left:54.6px;top:203.0px;font:11px/14px 'Liberation Sans',sans-serif;color:#000;letter-spacing:-0.101px">СоставОценочныхШкалКомпетенций</div>
<svg style="position:absolute;left:17px;top:224px" width="9" height="9" viewBox="0 0 9 9"><circle cx="4.500" cy="4.500" r="4" fill="#fff" stroke="#b4b4b4" stroke-width="1"/><path d="M2 4.500h5M4.500 2v5" stroke="#666" stroke-width="1"/></svg>
<svg class="i" style="left:33px;top:220px" width="16" height="16" viewBox="0 0 16 16"><rect x="1.500" y="2.500" width="12" height="11" rx="1" fill="url(#gCol)" stroke="#8397aa" stroke-width="1"/><path d="M5.500 2.500v11M9.500 2.500v11" stroke="#8397aa" stroke-width="1"/><rect x="2.200" y="3.200" width="2.700" height="2" fill="#f7d22e"/><rect x="6.100" y="3.200" width="2.800" height="2" fill="#f7d22e"/><rect x="10.100" y="3.200" width="2.700" height="2" fill="#f7d22e"/></svg>
<div class="t" style="left:54.6px;top:222.0px;font:11px/14px 'Liberation Sans',sans-serif;color:#000;letter-spacing:-0.091px">СоставыВоеннослужащих</div>
<svg style="position:absolute;left:17px;top:243px" width="9" height="9" viewBox="0 0 9 9"><circle cx="4.500" cy="4.500" r="4" fill="#fff" stroke="#b4b4b4" stroke-width="1"/><path d="M2 4.500h5M4.500 2v5" stroke="#666" stroke-width="1"/></svg>
<svg class="i" style="left:33px;top:239px" width="16" height="16" viewBox="0 0 16 16"><rect x="1.500" y="2.500" width="12" height="11" rx="1" fill="url(#gCol)" stroke="#8397aa" stroke-width="1"/><path d="M5.500 2.500v11M9.500 2.500v11" stroke="#8397aa" stroke-width="1"/><rect x="2.200" y="3.200" width="2.700" height="2" fill="#f7d22e"/><rect x="6.100" y="3.200" width="2.800" height="2" fill="#f7d22e"/><rect x="10.100" y="3.200" width="2.700" height="2" fill="#f7d22e"/></svg>
<div class="t" style="left:54.6px;top:241.0px;font:11px/14px 'Liberation Sans',sans-serif;color:#000;letter-spacing:0.006px">СостоянияЗаявокКандидатов</div>
<svg style="position:absolute;left:17px;top:262px" width="9" height="9" viewBox="0 0 9 9"><circle cx="4.500" cy="4.500" r="4" fill="#fff" stroke="#b4b4b4" stroke-width="1"/><path d="M2 4.500h5" stroke="#666" stroke-width="1"/></svg>
<svg class="i" style="left:33px;top:258px" width="16" height="16" viewBox="0 0 16 16"><rect x="1.500" y="2.500" width="12" height="11" rx="1" fill="url(#gCol)" stroke="#8397aa" stroke-width="1"/><path d="M5.500 2.500v11M9.500 2.500v11" stroke="#8397aa" stroke-width="1"/><rect x="2.200" y="3.200" width="2.700" height="2" fill="#f7d22e"/><rect x="6.100" y="3.200" width="2.800" height="2" fill="#f7d22e"/><rect x="10.100" y="3.200" width="2.700" height="2" fill="#f7d22e"/></svg>
<div class="t" style="left:54.6px;top:260.0px;font:11px/14px 'Liberation Sans',sans-serif;color:#000;letter-spacing:-0.015px">СотрудникиОрганизаций</div>
<svg style="position:absolute;left:36px;top:281px" width="9" height="9" viewBox="0 0 9 9"><circle cx="4.500" cy="4.500" r="4" fill="#fff" stroke="#b4b4b4" stroke-width="1"/><path d="M2 4.500h5M4.500 2v5" stroke="#666" stroke-width="1"/></svg>
<svg class="i" style="left:52px;top:277px" width="16" height="16" viewBox="0 0 16 16"><rect x="3.200" y="7" width="9.600" height="3" rx="1.500" fill="#7fa0c6" stroke="#5f82a8" stroke-width=".8"/><path d="M4.500 8h7" stroke="#c6d9ee" stroke-width=".9"/></svg>
<div class="t" style="left:74.2px;top:279.0px;font:11px/14px 'Liberation Sans',sans-serif;color:#000;letter-spacing:0.122px">Реквизиты</div>
<svg style="position:absolute;left:36px;top:300px" width="9" height="9" viewBox="0 0 9 9"><circle cx="4.500" cy="4.500" r="4" fill="#fff" stroke="#b4b4b4" stroke-width="1"/><path d="M2 4.500h5M4.500 2v5" stroke="#666" stroke-width="1"/></svg>
<svg class="i" style="left:52px;top:296px" width="16" height="16" viewBox="0 0 16 16"><rect x="2.500" y="3.500" width="11" height="10" fill="#fff" stroke="#8aa0b5" stroke-width="1"/><rect x="2" y="3" width="12" height="1.200" fill="#3f6f9c"/><rect x="2" y="13" width="12" height="1" fill="#3f6f9c"/><path d="M8 4v9.500" stroke="#6f8faa" stroke-width="1"/><path d="M4 6.500h2.500M4 8.500h2.500M4 10.500h2.500M9.500 6.500h2.500M9.500 8.500h2.500M9.500 10.500h2.500" stroke="#7f9fc0" stroke-width=".9"/></svg>
<div class="t" style="left:74.2px;top:298.0px;font:11px/14px 'Liberation Sans',sans-serif;color:#000;letter-spacing:-0.149px">Табличные части</div>
<svg style="position:absolute;left:36px;top:319px" width="9" height="9" viewBox="0 0 9 9"><circle cx="4.500" cy="4.500" r="4" fill="#fff" stroke="#b4b4b4" stroke-width="1"/><path d="M2 4.500h5M4.500 2v5" stroke="#666" stroke-width="1"/></svg>
<svg class="i" style="left:52px;top:315px" width="16" height="16" viewBox="0 0 16 16"><rect x="1.700" y="2.500" width="12.700" height="12" fill="url(#gPg2)" stroke="#7a94ab" stroke-width="1"/><rect x="1.200" y="2" width="13.700" height="1.700" fill="#3b6a94"/><path d="M3.500 6.500h6M3.500 8.500h4.500M3.500 10.500h3M3.500 12.500h2.500" stroke="#777" stroke-width="1"/><path d="M10.300 6.500h2.500M9 8.500h4M7.500 10.500h5M9 12.500h2" stroke="#c3ced8" stroke-width="1"/></svg>
<div class="t" style="left:74.2px;top:317.0px;font:11px/14px 'Liberation Sans',sans-serif;color:#000;letter-spacing:0.404px">Формы</div>
<svg class="i" style="left:52px;top:334px" width="16" height="16" viewBox="0 0 16 16"><circle cx="7.900" cy="7.900" r="6.900" fill="url(#gCmd)" stroke="#dcae2c" stroke-width="1"/><path d="M5.800 4.500L11.700 7.900 5.800 11.300z" fill="#fff" stroke="#cfa545" stroke-width=".9"/></svg>
<div class="t" style="left:74.2px;top:336.0px;font:11px/14px 'Liberation Sans',sans-serif;color:#000;letter-spacing:-0.087px">Команды</div>
<svg style="position:absolute;left:36px;top:357px" width="9" height="9" viewBox="0 0 9 9"><circle cx="4.500" cy="4.500" r="4" fill="#fff" stroke="#b4b4b4" stroke-width="1"/><path d="M2 4.500h5" stroke="#666" stroke-width="1"/></svg>
<svg class="i" style="left:52px;top:353px" width="16" height="16" viewBox="0 0 16 16"><rect x="1.700" y="2.500" width="12.700" height="12" fill="url(#gPg2)" stroke="#7a94ab" stroke-width="1"/><rect x="1.200" y="2" width="13.700" height="1.700" fill="#3b6a94"/><rect x="4.500" y="5.500" width="7.200" height="6.500" rx="1.200" fill="none" stroke="#6a6a6a" stroke-width=".9" stroke-dasharray="1.600 1"/><path d="M6 7.900h4.200M6 9.900h4.200" stroke="#e0392d" stroke-width="1"/></svg>
<div class="t" style="left:74.2px;top:355.0px;font:11px/14px 'Liberation Sans',sans-serif;color:#000;letter-spacing:-0.024px">Макеты</div>
<svg class="i" style="left:71px;top:372px" width="16" height="16" viewBox="0 0 16 16"><rect x="1.700" y="2.500" width="12.700" height="12" fill="url(#gPg2)" stroke="#7a94ab" stroke-width="1"/><rect x="1.200" y="2" width="13.700" height="1.700" fill="#3b6a94"/><rect x="4.500" y="5.500" width="7.200" height="6.500" rx="1.200" fill="none" stroke="#6a6a6a" stroke-width=".9" stroke-dasharray="1.600 1"/><path d="M6 7.900h4.200M6 9.900h4.200" stroke="#e0392d" stroke-width="1"/></svg>
<div class="t" style="left:93.2px;top:374.0px;font:11px/14px 'Liberation Sans',sans-serif;color:#000;letter-spacing:0.107px">ТрудовойДоговор</div>
<svg class="i" style="left:71px;top:391px" width="16" height="16" viewBox="0 0 16 16"><rect x="1.700" y="2.500" width="12.700" height="12" fill="url(#gPg2)" stroke="#7a94ab" stroke-width="1"/><rect x="1.200" y="2" width="13.700" height="1.700" fill="#3b6a94"/><rect x="4.500" y="5.500" width="7.200" height="6.500" rx="1.200" fill="none" stroke="#6a6a6a" stroke-width=".9" stroke-dasharray="1.600 1"/><path d="M6 7.900h4.200M6 9.900h4.200" stroke="#e0392d" stroke-width="1"/></svg>
<div class="t" style="left:93.2px;top:393.0px;font:11px/14px 'Liberation Sans',sans-serif;color:#000;letter-spacing:0.058px">ТрудовойДоговорПриДистанционнойРаботе</div>
<svg class="i" style="left:71px;top:410px" width="16" height="16" viewBox="0 0 16 16"><rect x="1.700" y="2.500" width="12.700" height="12" fill="url(#gPg2)" stroke="#7a94ab" stroke-width="1"/><rect x="1.200" y="2" width="13.700" height="1.700" fill="#3b6a94"/><rect x="4.500" y="5.500" width="7.200" height="6.500" rx="1.200" fill="none" stroke="#6a6a6a" stroke-width=".9" stroke-dasharray="1.600 1"/><path d="M6 7.900h4.200M6 9.900h4.200" stroke="#e0392d" stroke-width="1"/></svg>
<div class="t" style="left:93.2px;top:412.0px;font:11px/14px 'Liberation Sans',sans-serif;color:#000;letter-spacing:0.25px">МакетИн</div>
<svg class="i" style="left:71px;top:429px" width="16" height="16" viewBox="0 0 16 16"><rect x="1.700" y="2.500" width="12.700" height="12" fill="url(#gPg2)" stroke="#7a94ab" stroke-width="1"/><rect x="1.200" y="2" width="13.700" height="1.700" fill="#3b6a94"/><rect x="4.500" y="5.500" width="7.200" height="6.500" rx="1.200" fill="none" stroke="#6a6a6a" stroke-width=".9" stroke-dasharray="1.600 1"/><path d="M6 7.900h4.200M6 9.900h4.200" stroke="#e0392d" stroke-width="1"/></svg>
<div class="t" style="left:93.2px;top:431.0px;font:11px/14px 'Liberation Sans',sans-serif;color:#000;letter-spacing:0.25px">МакетРо</div>
<svg class="i" style="left:71px;top:448px" width="16" height="16" viewBox="0 0 16 16"><rect x="1.700" y="2.500" width="12.700" height="12" fill="url(#gPg2)" stroke="#7a94ab" stroke-width="1"/><rect x="1.200" y="2" width="13.700" height="1.700" fill="#3b6a94"/><rect x="4.500" y="5.500" width="7.200" height="6.500" rx="1.200" fill="none" stroke="#6a6a6a" stroke-width=".9" stroke-dasharray="1.600 1"/><path d="M6 7.900h4.200M6 9.900h4.200" stroke="#e0392d" stroke-width="1"/></svg>
<div class="t" style="left:93.2px;top:450.0px;font:11px/14px 'Liberation Sans',sans-serif;color:#000;letter-spacing:0.25px">МакетМо</div>
<div style="position:absolute;left:91px;top:466.0px;width:110px;height:19px;background:#6f95d1"></div>
<svg class="i" style="left:71px;top:467px" width="16" height="16" viewBox="0 0 16 16"><rect x="1.700" y="2.500" width="12.700" height="12" fill="url(#gPg2)" stroke="#7a94ab" stroke-width="1"/><rect x="1.200" y="2" width="13.700" height="1.700" fill="#3b6a94"/><rect x="4.500" y="5.500" width="7.200" height="6.500" rx="1.200" fill="none" stroke="#6a6a6a" stroke-width=".9" stroke-dasharray="1.600 1"/><path d="M6 7.900h4.200M6 9.900h4.200" stroke="#e0392d" stroke-width="1"/></svg>
<div class="t" style="left:93.2px;top:469.0px;font:11px/14px 'Liberation Sans',sans-serif;color:#fff;letter-spacing:0.25px">МакетПЗ</div>
<svg class="i" style="left:71px;top:486px" width="16" height="16" viewBox="0 0 16 16"><rect x="1.700" y="2.500" width="12.700" height="12" fill="url(#gPg2)" stroke="#7a94ab" stroke-width="1"/><rect x="1.200" y="2" width="13.700" height="1.700" fill="#3b6a94"/><rect x="4.500" y="5.500" width="7.200" height="6.500" rx="1.200" fill="none" stroke="#6a6a6a" stroke-width=".9" stroke-dasharray="1.600 1"/><path d="M6 7.900h4.200M6 9.900h4.200" stroke="#e0392d" stroke-width="1"/></svg>
<div class="t" style="left:93.2px;top:488.0px;font:11px/14px 'Liberation Sans',sans-serif;color:#000;letter-spacing:0.25px">МакетПЗ</div>
<svg class="i" style="left:71px;top:505px" width="16" height="16" viewBox="0 0 16 16"><rect x="1.700" y="2.500" width="12.700" height="12" fill="url(#gPg2)" stroke="#7a94ab" stroke-width="1"/><rect x="1.200" y="2" width="13.700" height="1.700" fill="#3b6a94"/><rect x="4.500" y="5.500" width="7.200" height="6.500" rx="1.200" fill="none" stroke="#6a6a6a" stroke-width=".9" stroke-dasharray="1.600 1"/><path d="M6 7.900h4.200M6 9.900h4.200" stroke="#e0392d" stroke-width="1"/></svg>
<div class="t" style="left:93.2px;top:507.0px;font:11px/14px 'Liberation Sans',sans-serif;color:#000;letter-spacing:-0.171px">ДопСоглашениеПЗ</div>
<svg style="position:absolute;left:17px;top:528px" width="9" height="9" viewBox="0 0 9 9"><circle cx="4.500" cy="4.500" r="4" fill="#fff" stroke="#b4b4b4" stroke-width="1"/><path d="M2 4.500h5M4.500 2v5" stroke="#666" stroke-width="1"/></svg>
<svg class="i" style="left:33px;top:524px" width="16" height="16" viewBox="0 0 16 16"><rect x="1.500" y="2.500" width="12" height="11" rx="1" fill="url(#gCol)" stroke="#8397aa" stroke-width="1"/><path d="M5.500 2.500v11M9.500 2.500v11" stroke="#8397aa" stroke-width="1"/><rect x="2.200" y="3.200" width="2.700" height="2" fill="#f7d22e"/><rect x="6.100" y="3.200" width="2.800" height="2" fill="#f7d22e"/><rect x="10.100" y="3.200" width="2.700" height="2" fill="#f7d22e"/></svg>
<div class="t" style="left:54.6px;top:526.0px;font:11px/14px 'Liberation Sans',sans-serif;color:#000;letter-spacing:-0.079px">СохраненныеНастройки</div>
<svg style="position:absolute;left:17px;top:547px" width="9" height="9" viewBox="0 0 9 9"><circle cx="4.500" cy="4.500" r="4" fill="#fff" stroke="#b4b4b4" stroke-width="1"/><path d="M2 4.500h5M4.500 2v5" stroke="#666" stroke-width="1"/></svg>
<svg class="i" style="left:33px;top:543px" width="16" height="16" viewBox="0 0 16 16"><rect x="1.500" y="2.500" width="12" height="11" rx="1" fill="url(#gCol)" stroke="#8397aa" stroke-width="1"/><path d="M5.500 2.500v11M9.500 2.500v11" stroke="#8397aa" stroke-width="1"/><rect x="2.200" y="3.200" width="2.700" height="2" fill="#f7d22e"/><rect x="6.100" y="3.200" width="2.800" height="2" fill="#f7d22e"/><rect x="10.100" y="3.200" width="2.700" height="2" fill="#f7d22e"/></svg>
<div class="t" style="left:54.6px;top:545.0px;font:11px/14px 'Liberation Sans',sans-serif;color:#000;letter-spacing:0.075px">СпискиПрофессийДолжностейЛьготногоПенсионногоОбеспечения</div>
<svg style="position:absolute;left:17px;top:566px" width="9" height="9" viewBox="0 0 9 9"><circle cx="4.500" cy="4.500" r="4" fill="#fff" stroke="#b4b4b4" stroke-width="1"/><path d="M2 4.500h5M4.500 2v5" stroke="#666" stroke-width="1"/></svg>
<svg class="i" style="left:33px;top:562px" width="16" height="16" viewBox="0 0 16 16"><rect x="1.500" y="2.500" width="12" height="11" rx="1" fill="url(#gCol)" stroke="#8397aa" stroke-width="1"/><path d="M5.500 2.500v11M9.500 2.500v11" stroke="#8397aa" stroke-width="1"/><rect x="2.200" y="3.200" width="2.700" height="2" fill="#f7d22e"/><rect x="6.100" y="3.200" width="2.800" height="2" fill="#f7d22e"/><rect x="10.100" y="3.200" width="2.700" height="2" fill="#f7d22e"/></svg>
<div class="t" style="left:54.6px;top:564.0px;font:11px/14px 'Liberation Sans',sans-serif;color:#000;letter-spacing:-0.036px">СпособыОтраженияЗарплатыВРеглУчете</div>
<svg style="position:absolute;left:17px;top:585px" width="9" height="9" viewBox="0 0 9 9"><circle cx="4.500" cy="4.500" r="4" fill="#fff" stroke="#b4b4b4" stroke-width="1"/><path d="M2 4.500h5M4.500 2v5" stroke="#666" stroke-width="1"/></svg>
<svg class="i" style="left:33px;top:581px" width="16" height="16" viewBox="0 0 16 16"><rect x="1.500" y="2.500" width="12" height="11" rx="1" fill="url(#gCol)" stroke="#8397aa" stroke-width="1"/><path d="M5.500 2.500v11M9.500 2.500v11" stroke="#8397aa" stroke-width="1"/><rect x="2.200" y="3.200" width="2.700" height="2" fill="#f7d22e"/><rect x="6.100" y="3.200" width="2.800" height="2" fill="#f7d22e"/><rect x="10.100" y="3.200" width="2.700" height="2" fill="#f7d22e"/></svg>
<div class="t" style="left:54.6px;top:583.0px;font:11px/14px 'Liberation Sans',sans-serif;color:#000;letter-spacing:-0.008px">СпособыОтраженияЗарплатыВУпрУчете</div>
<svg style="position:absolute;left:17px;top:604px" width="9" height="9" viewBox="0 0 9 9"><circle cx="4.500" cy="4.500" r="4" fill="#fff" stroke="#b4b4b4" stroke-width="1"/><path d="M2 4.500h5M4.500 2v5" stroke="#666" stroke-width="1"/></svg>
<svg class="i" style="left:33px;top:600px" width="16" height="16" viewBox="0 0 16 16"><rect x="1.500" y="2.500" width="12" height="11" rx="1" fill="url(#gCol)" stroke="#8397aa" stroke-width="1"/><path d="M5.500 2.500v11M9.500 2.500v11" stroke="#8397aa" stroke-width="1"/><rect x="2.200" y="3.200" width="2.700" height="2" fill="#f7d22e"/><rect x="6.100" y="3.200" width="2.800" height="2" fill="#f7d22e"/><rect x="10.100" y="3.200" width="2.700" height="2" fill="#f7d22e"/></svg>
<div class="t" style="left:54.6px;top:602.0px;font:11px/14px 'Liberation Sans',sans-serif;color:#000;letter-spacing:0.081px">ОбъектыЖивотноводства</div>
<svg style="position:absolute;left:17px;top:623px" width="9" height="9" viewBox="0 0 9 9"><circle cx="4.500" cy="4.500" r="4" fill="#fff" stroke="#b4b4b4" stroke-width="1"/><path d="M2 4.500h5M4.500 2v5" stroke="#666" stroke-width="1"/></svg>
<svg class="i" style="left:33px;top:619px" width="16" height="16" viewBox="0 0 16 16"><rect x="1.500" y="2.500" width="12" height="11" rx="1" fill="url(#gCol)" stroke="#8397aa" stroke-width="1"/><path d="M5.500 2.500v11M9.500 2.500v11" stroke="#8397aa" stroke-width="1"/><rect x="2.200" y="3.200" width="2.700" height="2" fill="#f7d22e"/><rect x="6.100" y="3.200" width="2.800" height="2" fill="#f7d22e"/><rect x="10.100" y="3.200" width="2.700" height="2" fill="#f7d22e"/></svg>
<div class="t" style="left:54.6px;top:621.0px;font:11px/14px 'Liberation Sans',sans-serif;color:#000;letter-spacing:0.074px">ОбъектыПромПроизводства</div>
<svg style="position:absolute;left:17px;top:642px" width="9" height="9" viewBox="0 0 9 9"><circle cx="4.500" cy="4.500" r="4" fill="#fff" stroke="#b4b4b4" stroke-width="1"/><path d="M2 4.500h5M4.500 2v5" stroke="#666" stroke-width="1"/></svg>
<svg class="i" style="left:33px;top:638px" width="16" height="16" viewBox="0 0 16 16"><rect x="1.500" y="2.500" width="12" height="11" rx="1" fill="url(#gCol)" stroke="#8397aa" stroke-width="1"/><path d="M5.500 2.500v11M9.500 2.500v11" stroke="#8397aa" stroke-width="1"/><rect x="2.200" y="3.200" width="2.700" height="2" fill="#f7d22e"/><rect x="6.100" y="3.200" width="2.800" height="2" fill="#f7d22e"/><rect x="10.100" y="3.200" width="2.700" height="2" fill="#f7d22e"/></svg>
<div class="t" style="left:54.6px;top:640.0px;font:11px/14px 'Liberation Sans',sans-serif;color:#000;letter-spacing:0.036px">ОбъектыРастениеводства</div>
<svg style="position:absolute;left:17px;top:661px" width="9" height="9" viewBox="0 0 9 9"><circle cx="4.500" cy="4.500" r="4" fill="#fff" stroke="#b4b4b4" stroke-width="1"/><path d="M2 4.500h5M4.500 2v5" stroke="#666" stroke-width="1"/></svg>
<svg class="i" style="left:33px;top:657px" width="16" height="16" viewBox="0 0 16 16"><rect x="1.500" y="2.500" width="12" height="11" rx="1" fill="url(#gCol)" stroke="#8397aa" stroke-width="1"/><path d="M5.500 2.500v11M9.500 2.500v11" stroke="#8397aa" stroke-width="1"/><rect x="2.200" y="3.200" width="2.700" height="2" fill="#f7d22e"/><rect x="6.100" y="3.200" width="2.800" height="2" fill="#f7d22e"/><rect x="10.100" y="3.200" width="2.700" height="2" fill="#f7d22e"/></svg>
<div class="t" style="left:54.6px;top:659.0px;font:11px/14px 'Liberation Sans',sans-serif;color:#000;letter-spacing:0.069px">СельскохозяйственныеКультуры</div>
<svg style="position:absolute;left:17px;top:680px" width="9" height="9" viewBox="0 0 9 9"><circle cx="4.500" cy="4.500" r="4" fill="#fff" stroke="#b4b4b4" stroke-width="1"/><path d="M2 4.500h5M4.500 2v5" stroke="#666" stroke-width="1"/></svg>
<svg class="i" style="left:33px;top:676px" width="16" height="16" viewBox="0 0 16 16"><rect x="1.500" y="2.500" width="12" height="11" rx="1" fill="url(#gCol)" stroke="#8397aa" stroke-width="1"/><path d="M5.500 2.500v11M9.500 2.500v11" stroke="#8397aa" stroke-width="1"/><rect x="2.200" y="3.200" width="2.700" height="2" fill="#f7d22e"/><rect x="6.100" y="3.200" width="2.800" height="2" fill="#f7d22e"/><rect x="10.100" y="3.200" width="2.700" height="2" fill="#f7d22e"/></svg>
<div class="t" style="left:54.6px;top:678.0px;font:11px/14px 'Liberation Sans',sans-serif;color:#000;letter-spacing:0.193px">ГодаУрожая</div>
<svg style="position:absolute;left:17px;top:699px" width="9" height="9" viewBox="0 0 9 9"><circle cx="4.500" cy="4.500" r="4" fill="#fff" stroke="#b4b4b4" stroke-width="1"/><path d="M2 4.500h5M4.500 2v5" stroke="#666" stroke-width="1"/></svg>
<svg class="i" style="left:33px;top:695px" width="16" height="16" viewBox="0 0 16 16"><rect x="1.500" y="2.500" width="12" height="11" rx="1" fill="url(#gCol)" stroke="#8397aa" stroke-width="1"/><path d="M5.500 2.500v11M9.500 2.500v11" stroke="#8397aa" stroke-width="1"/><rect x="2.200" y="3.200" width="2.700" height="2" fill="#f7d22e"/><rect x="6.100" y="3.200" width="2.800" height="2" fill="#f7d22e"/><rect x="10.100" y="3.200" width="2.700" height="2" fill="#f7d22e"/></svg>
<div style="position:absolute;left:136px;top:411px;width:16px;height:16px;background:#d3d5d9"></div>
<div style="position:absolute;left:152px;top:411px;width:16px;height:16px;background:#d1d4d8"></div>
<div style="position:absolute;left:168px;top:411px;width:16px;height:16px;background:#e6e6e7"></div>
<div style="position:absolute;left:136px;top:427px;width:16px;height:16px;background:#d5d6da"></div>
<div style="position:absolute;left:152px;top:427px;width:16px;height:16px;background:#d9dcdf"></div>
<div style="position:absolute;left:168px;top:427px;width:16px;height:16px;background:#d2d3d6"></div>
<div style="position:absolute;left:184px;top:427px;width:16px;height:16px;background:#d6d7da"></div>
<div style="position:absolute;left:200px;top:427px;width:16px;height:16px;background:#f5f5f6"></div>
<div style="position:absolute;left:136px;top:443px;width:16px;height:16px;background:#e9e9eb"></div>
<div style="position:absolute;left:152px;top:443px;width:16px;height:16px;background:#f3f3f4"></div>
<div style="position:absolute;left:168px;top:443px;width:16px;height:16px;background:#fff"></div>
<div style="position:absolute;left:184px;top:443px;width:16px;height:16px;background:#fff"></div>
<div style="position:absolute;left:136px;top:459px;width:16px;height:16px;background:#a6b9db"></div>
<div style="position:absolute;left:152px;top:459px;width:16px;height:16px;background:#a9bddf"></div>
<div style="position:absolute;left:168px;top:459px;width:16px;height:16px;background:#aec3e4"></div>
<div style="position:absolute;left:184px;top:459px;width:16px;height:16px;background:#b0c5e6"></div>
<div style="position:absolute;left:200px;top:459px;width:16px;height:16px;background:#f3f6fb"></div>
<div style="position:absolute;left:136px;top:475px;width:16px;height:16px;background:#a8bbdd"></div>
<div style="position:absolute;left:152px;top:475px;width:16px;height:16px;background:#abbfe0"></div>
<div style="position:absolute;left:168px;top:475px;width:16px;height:16px;background:#afc4e5"></div>
<div style="position:absolute;left:184px;top:475px;width:16px;height:16px;background:#b0c5e6"></div>
<div style="position:absolute;left:200px;top:475px;width:16px;height:16px;background:#f3f6fb"></div>
<div style="position:absolute;left:136px;top:491px;width:16px;height:11px;background:#c6c3c8"></div>
<div style="position:absolute;left:152px;top:491px;width:16px;height:11px;background:#c9c8cc"></div>
<div style="position:absolute;left:168px;top:491px;width:16px;height:11px;background:#cdcdd1"></div>
<div style="position:absolute;left:184px;top:491px;width:16px;height:11px;background:#d1d0d5"></div>
<div style="position:absolute;left:200px;top:491px;width:16px;height:11px;background:#f7f7f9"></div>
<div style="position:absolute;left:188px;top:502px;width:12px;height:18px;background:#dddcdf"></div>
<div style="position:absolute;left:200px;top:502px;width:20px;height:18px;background:#e5e5e6"></div>
<svg style="position:absolute;left:40px;top:398px" width="170" height="136" viewBox="40 398 170 136"><rect x="45.1" y="403.9" width="156.600" height="123.800" rx="6" fill="none" stroke="#fff" stroke-width="4.600"/><rect x="46.050" y="404.850" width="154.700" height="121.900" rx="5" fill="none" stroke="#e2382d" stroke-width="3.100"/></svg>
<div style="position:absolute;left:432px;top:98px;width:1070px;height:620px;border:2px solid #6d6d6d;border-top-color:#707070;background:#fff;box-sizing:border-box"></div>
<div style="position:absolute;left:434px;top:100px;width:16px;height:600px;background:conic-gradient(#e6e2c8 25%,#fdfdf8 0 50%,#e6e2c8 0 75%,#fdfdf8 0) 0 0/2px 2px"></div>
<div style="position:absolute;left:458px;top:100px;width:1px;height:600px;background:#555"></div>
<div style="position:absolute;left:434px;top:164px;width:16px;height:16px;border-radius:2px;background:#7d96ad"></div>
<pre id="code" style="position:absolute;left:469px;top:102px;margin:0;width:1030px;height:600px;overflow:hidden;font:13.333px/16px 'Liberation Mono',monospace;color:#00f;white-space:pre;-webkit-text-stroke:0.1px #fff">
        ТабДокумент<span class="r">.</span>Вывести<span class="r">(</span>Макет<span class="r">)</span><span class="r">;</span>

        <span class="r">Возврат</span> УниверсальныеМеханизмы<span class="r">.</span>НапечататьДокумент<span class="r">(</span>ТабДокумент<span class="r">,</span> КоличествоЭкземпляров<span class="r">,</span> НаПринтер<span class="r">,</span> <span class="k">"Трудовой договор"</span><span class="r">)</span><span class="r">;</span>

    <span class="r">ИначеЕсли</span> ИмяМакета <span class="r">=</span> <span class="k">"МакетПЗ        к"</span> <span class="r">Тогда</span>

        ТабДокумент <span class="r">=</span> <span class="r">Новый</span> ТабличныйДокумент<span class="r">;</span>
        ТабДокумент<span class="r">.</span>ИмяПараметровПечати <span class="r">=</span> <span class="k">"ПАРАМЕТРЫ_ПЕЧАТИ_ТрудовойДоговорПЗ           "</span><span class="r">;</span>

        <span class="g">// получаем данные для печати</span>
        Выборка <span class="r">=</span> ЭтотОбъект<span class="r">.</span>СформироватьЗапросДляПечатиТрудовогоДоговораРос           <span class="r">)</span><span class="r">.</span>Выбрать<span class="r">(</span><span class="r">)</span><span class="r">;</span>

        <span class="g">// получаем макет</span>
        Макет <span class="r">=</span> ЭтотОбъект<span class="r">.</span>ПолучитьМакет<span class="r">(</span><span class="k">"МакетП          "</span><span class="r">)</span><span class="r">;</span>

        <span class="g">// выводим данные</span>
        <span class="r">Если</span> Выборка<span class="r">.</span>Следующий<span class="r">(</span><span class="r">)</span> <span class="r">Тогда</span>
            Макет<span class="r">.</span>Параметры<span class="r">.</span>Заполнить<span class="r">(</span>Выборка<span class="r">)</span><span class="r">;</span>

            НаселенныйПунктСокращение <span class="r">=</span> <span class="k">""</span><span class="r">;</span>
            НаселенныйПунктНазвание <span class="r">=</span> УправлениеКонтактнойИнформацией<span class="r">.</span>ПолучитьИмяИАдресноеСокращение<span class="r">(</span>Выборка<span class="r">.</span>НаселенныйПунктАдрес<span class="r">)</span><span class="r">;</span>

            НаселенныйПунктСокращение <span class="r">=</span> СокрЛП<span class="r">(</span>НаселенныйПунктСокращение<span class="r">)</span><span class="r">;</span>
            <span class="r">Если</span> СтрЗаканчиваетсяНа<span class="r">(</span>НаселенныйПунктСокращение<span class="r">,</span><span class="k">"."</span><span class="r">)</span> <span class="r">Тогда</span>
                НаселенныйПунктСокращение <span class="r">=</span> Лев<span class="r">(</span>НаселенныйПунктСокращение<span class="r">,</span>СтрДлина<span class="r">(</span>НаселенныйПунктСокращение<span class="r">)</span><span class="r">-</span><span class="k">1</span><span class="r">)</span><span class="r">;</span>
            <span class="r">КонецЕсли</span><span class="r">;</span>

            РегионАдрес <span class="r">=</span> <span class="r">?</span><span class="r">(</span>Выборка<span class="r">.</span>РегионАдрес<span class="r">=</span><span class="k">""</span><span class="r">,</span><span class="k">""</span><span class="r">,</span>Выборка<span class="r">.</span>РегионАдрес<span class="r">+</span><span class="k">", "</span><span class="r">)</span><span class="r">;</span>
            РайонАдрес <span class="r">=</span> <span class="r">?</span><span class="r">(</span>Выборка<span class="r">.</span>РайонАдрес<span class="r">=</span><span class="k">""</span><span class="r">,</span><span class="k">""</span><span class="r">,</span>Выборка<span class="r">.</span>РайонАдрес<span class="r">+</span><span class="k">", "</span><span class="r">)</span><span class="r">;</span>
            Макет<span class="r">.</span>Параметры<span class="r">.</span>НаселенныйПункт <span class="r">=</span> НаселенныйПунктСокращение<span class="r">+</span><span class="k">". "</span><span class="r">+</span>НаселенныйПунктНазвание<span class="r">;</span>
            Макет<span class="r">.</span>Параметры<span class="r">.</span>Заполнить<span class="r">(</span>Выборка<span class="r">)</span><span class="r">;</span>
            Макет<span class="r">.</span>Параметры<span class="r">.</span>ИспытательныйСрокСтрокой <span class="r">=</span> <span class="r">?</span><span class="r">(</span><span class="r">НЕ</span> ЗначениеЗаполнено<span class="r">(</span>Выборка<span class="r">.</span>ИспытательныйСрок<span class="r">)</span><span class="r">,</span><span class="k">"             месяцев"</span><span class="r">,</span>
                ИспытательныйСрокПрописью <span class="r">=</span> ЧислоПрописью<span class="r">(</span>Выборка<span class="r">.</span>ИспытательныйСрок<span class="r">,</span> <span class="k">"L=ru_RU"</span><span class="r">,</span><span class="k">"месяц, месяца, месяцев, м"</span><span class="r">)</span><span class="r">;</span>
                ИспытательныйСрокПрописью <span class="r">=</span> СтрЗаменить<span class="r">(</span>ИспытательныйСрокПрописью<span class="r">,</span><span class="k">" 00 "</span><span class="r">,</span><span class="k">""</span><span class="r">)</span><span class="r">;</span>
                ИспытательныйСрокПрописью <span class="r">=</span> СтрЗаменить<span class="r">(</span>ИспытательныйСрокПрописью<span class="r">,</span><span class="k">" мес"</span><span class="r">,</span><span class="k">") мес"</span><span class="r">)</span><span class="r">;</span>
                ИспытательныйСрокПрописью <span class="r">=</span> <span class="k">"("</span><span class="r">+</span>НРег<span class="r">(</span>ИспытательныйСрокПрописью<span class="r">)</span><span class="r">;</span>
                Макет<span class="r">.</span>Параметры<span class="r">.</span>ИспытательныйСрокСтрокой <span class="r">=</span> <span class="r">?</span><span class="r">(</span>ЗначениеЗаполнено<span class="r">(</span>Выборка<span class="r">.</span>ИспытательныйСрок<span class="r">)</span><span class="r">,</span><span class="k">""</span><span class="r">+</span>Выборка<span class="r">.</span>ИспытательныйСрок<span class="r">+</span><span class="k">" месяц"</span><span class="r">)</span><span class="r">;</span>
</pre>
<div style="position:absolute;left:736px;top:157px;width:16px;height:16px;background:#e4e4e4"></div>
<div style="position:absolute;left:752px;top:157px;width:16px;height:16px;background:#ededed"></div>
<div style="position:absolute;left:768px;top:157px;width:16px;height:16px;background:#e7e7e7"></div>
<div style="position:absolute;left:784px;top:157px;width:16px;height:16px;background:#e9e9e9"></div>
<div style="position:absolute;left:800px;top:157px;width:12px;height:16px;background:#e2e2e2"></div>
<div style="position:absolute;left:736px;top:173px;width:16px;height:8px;background:#e0e0e0"></div>
<div style="position:absolute;left:752px;top:173px;width:16px;height:8px;background:#d4d4d4"></div>
<div style="position:absolute;left:768px;top:173px;width:16px;height:8px;background:#d8d8d8"></div>
<div style="position:absolute;left:784px;top:173px;width:16px;height:8px;background:#d9d9d9"></div>
<div style="position:absolute;left:800px;top:173px;width:12px;height:8px;background:#cacaca"></div>
<div style="position:absolute;left:1080px;top:209px;width:16px;height:16px;background:#dcdcdc"></div>
<div style="position:absolute;left:1096px;top:209px;width:16px;height:16px;background:#dadada"></div>
<div style="position:absolute;left:1112px;top:209px;width:16px;height:16px;background:#e6e7e6"></div>
<div style="position:absolute;left:1128px;top:209px;width:16px;height:16px;background:#dddddc"></div>
<div style="position:absolute;left:1144px;top:209px;width:16px;height:16px;background:#dddddd"></div>
<div style="position:absolute;left:1160px;top:209px;width:14px;height:16px;background:#d9dada"></div>
<div style="position:absolute;left:1096px;top:225px;width:16px;height:4px;background:#ededed"></div>
<div style="position:absolute;left:1112px;top:225px;width:16px;height:4px;background:#dedede"></div>
<div style="position:absolute;left:1078px;top:255px;width:16px;height:16px;background:#e3e3fc"></div>
<div style="position:absolute;left:1094px;top:255px;width:16px;height:16px;background:#ebe9fd"></div>
<div style="position:absolute;left:1110px;top:255px;width:16px;height:16px;background:#e1e0fb"></div>
<div style="position:absolute;left:1126px;top:255px;width:16px;height:16px;background:#e6e5fc"></div>
<div style="position:absolute;left:1142px;top:255px;width:16px;height:16px;background:#e8e7fd"></div>
<div style="position:absolute;left:1158px;top:255px;width:6px;height:16px;background:#ffecec"></div>
<div style="position:absolute;left:1078px;top:271px;width:16px;height:8px;background:#e9e9fd"></div>
<div style="position:absolute;left:1094px;top:271px;width:16px;height:8px;background:#ecebfe"></div>
<div style="position:absolute;left:1110px;top:271px;width:16px;height:8px;background:#e8e8fd"></div>
<div style="position:absolute;left:1126px;top:271px;width:16px;height:8px;background:#eaeafd"></div>
<div style="position:absolute;left:1142px;top:271px;width:16px;height:8px;background:#ebebfe"></div>
<div style="position:absolute;left:1158px;top:271px;width:6px;height:8px;background:#ffeeee"></div>
<div style="position:absolute;left:854px;top:301px;width:16px;height:16px;background:#e4e4e5"></div>
<div style="position:absolute;left:870px;top:301px;width:16px;height:16px;background:#ececec"></div>
<div style="position:absolute;left:886px;top:301px;width:16px;height:16px;background:#e6e6e6"></div>
<div style="position:absolute;left:902px;top:301px;width:16px;height:16px;background:#ebebeb"></div>
<div style="position:absolute;left:918px;top:301px;width:16px;height:16px;background:#e3e3e3"></div>
<div style="position:absolute;left:854px;top:317px;width:16px;height:16px;background:#f1f1f1"></div>
<div style="position:absolute;left:870px;top:317px;width:16px;height:16px;background:#e9e9e9"></div>
<div style="position:absolute;left:886px;top:317px;width:16px;height:16px;background:#ebebeb"></div>
<div style="position:absolute;left:902px;top:317px;width:16px;height:16px;background:#eeeeee"></div>
<div style="position:absolute;left:918px;top:317px;width:16px;height:16px;background:#e5e6e7"></div>
</body></html>
